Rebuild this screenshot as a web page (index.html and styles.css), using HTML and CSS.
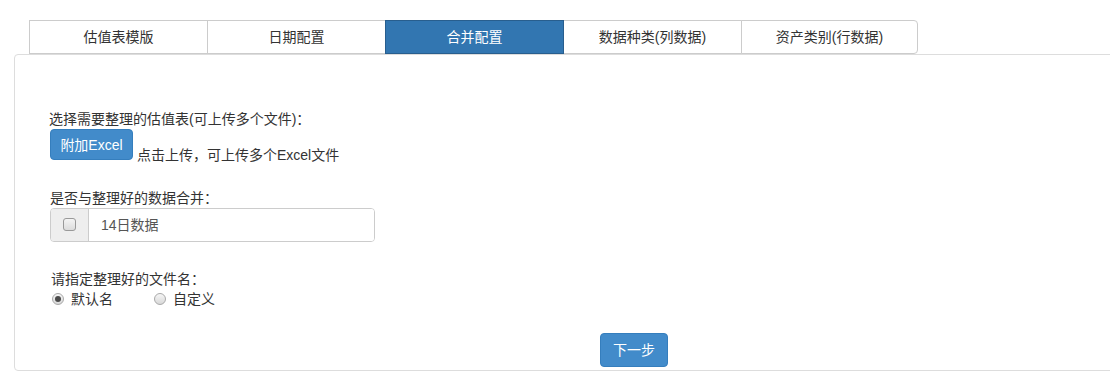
FILE: index.html
```html
<!DOCTYPE html>
<html lang="zh-CN">
<head>
<meta charset="utf-8">
<title>合并配置</title>
<link rel="stylesheet" href="styles.css">
</head>
<body>
<div class="page">
  <div class="tabs">
    <div class="tab">估值表模版</div>
    <div class="tab">日期配置</div>
    <div class="tab active">合并配置</div>
    <div class="tab">数据种类(列数据)</div>
    <div class="tab last">资产类别(行数据)</div>
  </div>
  <div class="panel">
    <div class="form">
      <div class="label">选择需要整理的估值表(可上传多个文件)：</div>
      <div class="upload-row">
        <span class="btn btn-upload">附加Excel</span>
        <span class="hint">点击上传，可上传多个Excel文件</span>
      </div>
      <div class="label label-merge">是否与整理好的数据合并：</div>
      <div class="input-group">
        <span class="addon"><input type="checkbox" class="check"></span>
        <input type="text" class="text-input" value="14日数据">
      </div>
      <div class="label label-name">请指定整理好的文件名：</div>
      <div class="radios">
        <label class="radio-item"><span class="radio checked"></span><span>默认名</span></label>
        <label class="radio-item"><span class="radio"></span><span>自定义</span></label>
      </div>
    </div>
    <div class="actions">
      <span class="btn btn-next">下一步</span>
    </div>
  </div>
</div>
</body>
</html>
```

FILE: styles.css
```css
html, body {
  margin: 0;
  padding: 0;
  overflow: hidden;
  background: #fff;
}

body {
  font-family: "Liberation Sans", "Noto Sans CJK SC", sans-serif;
  font-size: 14px;
  color: #333;
  line-height: 20px;
}

.page {
  width: 1300px;
}

.tabs {
  display: flex;
  margin-left: 29px;
  padding-top: 20px;
}

.tab {
  width: 177px;
  height: 32px;
  line-height: 32px;
  border: 1px solid #ccc;
  text-align: center;
  color: #333;
  background: #fff;
  margin-left: -1px;
}

.tab:first-child {
  margin-left: 0;
}

.tab.active {
  background: #3276b1;
  border-color: #285e8e;
  color: #fff;
  position: relative;
  z-index: 1;
}

.tab.last {
  width: 175px;
  border-radius: 0 4px 4px 0;
}

.panel {
  margin-left: 14px;
  width: 1238px;
  height: 315px;
  border: 1px solid #ddd;
  border-radius: 4px;
  display: flex;
  flex-direction: column;
}

.form {
  padding: 54px 0 0 34px;
}

.label {
  height: 20px;
}

.upload-row {
  display: flex;
  align-items: flex-start;
}

.btn {
  display: inline-flex;
  align-items: center;
  justify-content: center;
  background: #428bca;
  border: 1px solid #357ebd;
  color: #fff;
  border-radius: 4px;
  box-sizing: border-box;
}

.btn-upload {
  width: 83px;
  height: 31px;
  margin-left: 1px;
}

.hint {
  margin-top: 16px;
  margin-left: 4px;
}

.label-merge {
  margin-top: 23px;
  margin-left: 1px;
}

.input-group {
  display: flex;
  width: 325px;
  height: 34px;
  box-sizing: border-box;
  border: 1px solid #ccc;
  border-radius: 4px;
  margin-left: 1px;
  overflow: hidden;
}

.addon {
  width: 37px;
  background: #eee;
  border-right: 1px solid #ccc;
  display: flex;
  align-items: center;
  justify-content: center;
}

.check {
  appearance: none;
  -webkit-appearance: none;
  width: 13px;
  height: 13px;
  margin: 0 1px 2px 0;
  border: 1px solid #999;
  border-radius: 3px;
  background: linear-gradient(#f4f4f4, #dcdcdc);
  box-sizing: border-box;
}

.text-input {
  flex: 1;
  border: none;
  outline: none;
  padding: 0 12px;
  font: inherit;
  color: #555;
  background: #fff;
}

.label-name {
  margin-top: 27px;
  margin-left: 2px;
}

.radios {
  display: flex;
  margin-left: 3px;
}

.radio-item {
  display: flex;
  align-items: center;
  gap: 7px;
  margin-right: 41px;
}

.radio {
  width: 12px;
  height: 12px;
  box-sizing: border-box;
  border: 1px solid #a9a9a9;
  border-radius: 50%;
  background: linear-gradient(#f6f6f6, #d8d8d8);
  display: flex;
  align-items: center;
  justify-content: center;
}

.radio.checked::after {
  content: "";
  width: 6px;
  height: 6px;
  border-radius: 50%;
  background: #4a4a4a;
}

.actions {
  margin-top: 24px;
  display: flex;
  justify-content: center;
}

.btn-next {
  width: 68px;
  height: 34px;
}
```
